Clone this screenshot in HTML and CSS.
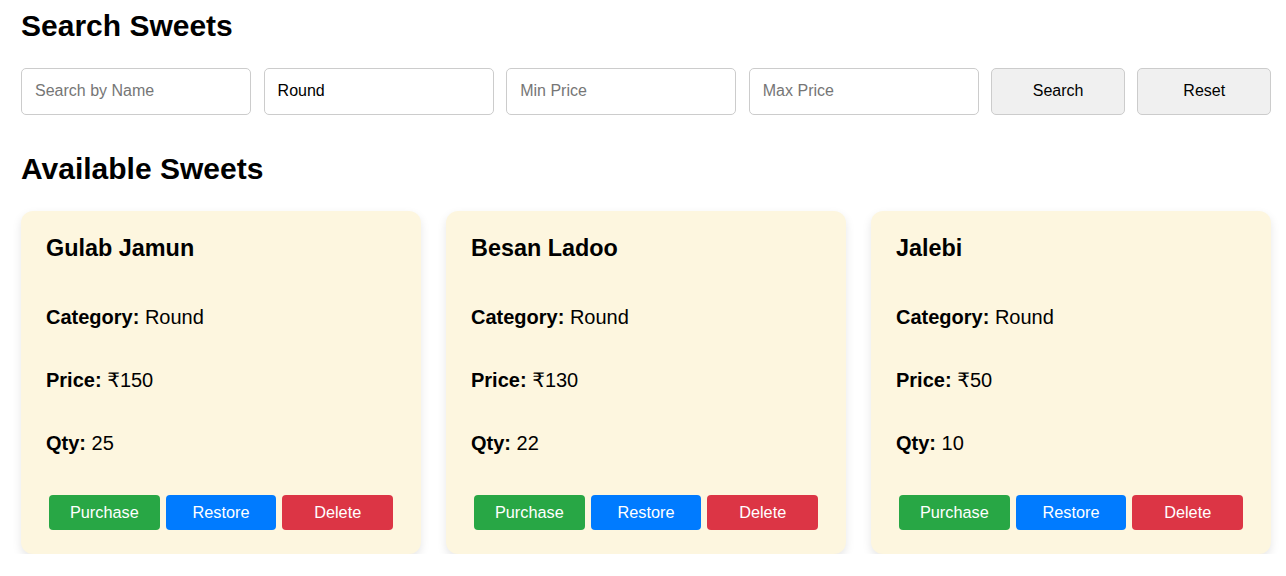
FILE: index.html
```html
<!DOCTYPE html>
<html lang="en">
<head>
<meta charset="utf-8">
<title>Sweets</title>
<link rel="stylesheet" href="styles.css">
</head>
<body>
<main class="page">
  <h2 class="title">Search Sweets</h2>
  <div class="search-bar">
    <input class="field" type="text" placeholder="Search by Name">
    <input class="field" type="text" value="Round">
    <input class="field" type="text" placeholder="Min Price">
    <input class="field" type="text" placeholder="Max Price">
    <button class="btn-plain">Search</button>
    <button class="btn-plain">Reset</button>
  </div>

  <h2 class="title title-list">Available Sweets</h2>
  <div class="cards">
    <div class="card">
      <h3 class="card-name">Gulab Jamun</h3>
      <p class="card-row"><b>Category:</b> Round</p>
      <p class="card-row"><b>Price:</b> ₹150</p>
      <p class="card-row"><b>Qty:</b> 25</p>
      <div class="actions">
        <button class="act act-green">Purchase</button>
        <button class="act act-blue">Restore</button>
        <button class="act act-red">Delete</button>
      </div>
    </div>
    <div class="card">
      <h3 class="card-name">Besan Ladoo</h3>
      <p class="card-row"><b>Category:</b> Round</p>
      <p class="card-row"><b>Price:</b> ₹130</p>
      <p class="card-row"><b>Qty:</b> 22</p>
      <div class="actions">
        <button class="act act-green">Purchase</button>
        <button class="act act-blue">Restore</button>
        <button class="act act-red">Delete</button>
      </div>
    </div>
    <div class="card">
      <h3 class="card-name">Jalebi</h3>
      <p class="card-row"><b>Category:</b> Round</p>
      <p class="card-row"><b>Price:</b> ₹50</p>
      <p class="card-row"><b>Qty:</b> 10</p>
      <div class="actions">
        <button class="act act-green">Purchase</button>
        <button class="act act-blue">Restore</button>
        <button class="act act-red">Delete</button>
      </div>
    </div>
  </div>
</main>
</body>
</html>
```

FILE: styles.css
```css
html, body {
  margin: 0;
  padding: 0;
  background: #ffffff;
}

body {
  font-family: "Liberation Sans", Arial, "DejaVu Sans", sans-serif;
  font-size: 20px;
  color: #000;
}

.page {
  padding: 9px 15px 0 21px;
}

.title {
  margin: 0;
  font-size: 30px;
  font-weight: bold;
  line-height: 34.5px;
}

.title-list {
  margin-top: 37.5px;
}

.search-bar {
  display: flex;
  gap: 12.6px;
  margin-top: 24.5px;
}

.field {
  box-sizing: border-box;
  width: 230px;
  height: 46.5px;
  padding: 0 13px;
  border: 1px solid #cccccc;
  border-radius: 5px;
  font-family: "Liberation Sans", Arial, sans-serif;
  font-size: 16px;
  color: #000;
  background: #fff;
  outline: none;
}

.field::placeholder {
  color: #767676;
}

.btn-plain {
  box-sizing: border-box;
  width: 134px;
  height: 46.5px;
  border: 1px solid #cccccc;
  border-radius: 5px;
  background: #f0f0f0;
  font-family: "Liberation Sans", Arial, sans-serif;
  font-size: 16px;
  color: #000;
}

.cards {
  display: flex;
  gap: 25px;
  margin-top: 24.8px;
}

.card {
  box-sizing: border-box;
  width: 400px;
  padding: 24px 25px 24px 25px;
  background: #fdf6df;
  border-radius: 12px;
  box-shadow: 0 4px 10px rgba(0, 0, 0, 0.1);
}

.card-name {
  margin: 0 0 44px;
  font-size: 23.4px;
  font-weight: bold;
  line-height: 27px;
}

.card-row {
  margin: 0 0 39.8px;
  line-height: 23px;
}

.actions {
  display: flex;
}

.act {
  flex: 1;
  margin: 0 3px;
  height: 35px;
  border: none;
  border-radius: 4px;
  color: #fff;
  font-family: "Liberation Sans", Arial, sans-serif;
  font-size: 16.3px;
}

.act-green { background: #28a745; }
.act-blue { background: #007bff; }
.act-red { background: #dc3545; }
```
